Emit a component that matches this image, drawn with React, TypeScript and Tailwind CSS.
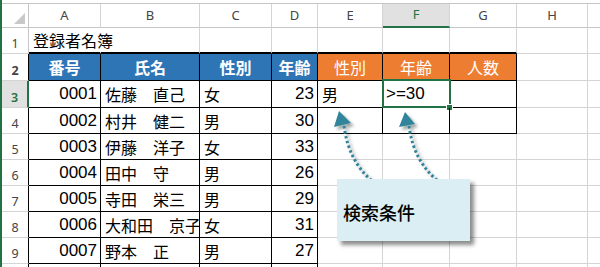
import React from 'react';

const W = ['w-[27px]', 'w-[72px]', 'w-[99px]', 'w-[72px]', 'w-[46px]', 'w-[65px]', 'w-[67px]', 'w-[67px]', 'w-[71px]'];
const GRID = 'border-[#d4d4d4]';

const people = [
  ['0001', '佐藤　直己', '女', '23'],
  ['0002', '村井　健二', '男', '30'],
  ['0003', '伊藤　洋子', '女', '33'],
  ['0004', '田中　守', '男', '26'],
  ['0005', '寺田　栄三', '男', '29'],
  ['0006', '大和田　京子', '女', '31'],
  ['0007', '野本　正', '男', '27'],
];

type CellProps = {
  w: string;
  r?: string;
  b?: string;
  className?: string;
  children?: React.ReactNode;
};

// one sheet cell; r / b are the right and bottom border classes
const Cell = ({ w, r = 'border-r border-r-[#d4d4d4]', b = 'border-b border-b-[#d4d4d4]', className = '', children }: CellProps) => (
  <div className={`${w} shrink-0 h-full box-border flex items-center whitespace-nowrap ${r} ${b} ${className}`}>
    {children}
  </div>
);

const RowHead = ({ n, r = 'border-r border-r-[#c6c6c6]', active = false }: { n: number; r?: string; active?: boolean }) => (
  <div
    className={`w-[27px] shrink-0 h-full box-border flex items-end justify-center pb-[3px] border-b border-b-[#d4d4d4] font-['Noto_Sans',sans-serif] text-[12.5px] leading-none ${r} ${
      active ? 'bg-[#e1e1e1] text-[#217346] font-semibold' : 'bg-white text-[#444]'
    }`}
  >
    {n}
  </div>
);

const Rest = ({ b = 'border-b border-b-[#d4d4d4]' }: { b?: string }) => <div className={`flex-1 h-full box-border ${b}`} />;

const BLK_R = 'border-r border-r-black';
const BLK_B = 'border-b border-b-black';

const DataRow = ({ i, p }: { i: number; p: string[] }) => {
  const rowNo = i + 3;
  const inSearch = rowNo <= 4;
  const last = rowNo === 9;
  const b = last ? BLK_B : BLK_B;
  return (
    <div className={`flex ${rowNo === 3 ? 'h-[27px]' : 'h-[26px]'}`}>
      <RowHead n={rowNo} active={rowNo === 3} r={rowNo === 3 ? 'border-r-2 border-r-[#217346]' : BLK_R} />
      <Cell w={W[1]} r={BLK_R} b={b} className="justify-end pr-[3px] text-[17px] font-['Liberation_Sans','Noto_Sans_CJK_JP',sans-serif]">
        {p[0]}
      </Cell>
      <Cell w={W[2]} r={BLK_R} b={b} className="pl-[4px] text-[16px] overflow-hidden">
        {p[1]}
      </Cell>
      <Cell w={W[3]} r={BLK_R} b={b} className="pl-[4px] text-[16px]">
        {p[2]}
      </Cell>
      <Cell w={W[4]} r={BLK_R} b={b} className="justify-end pr-[3px] text-[17px] font-['Liberation_Sans',sans-serif]">
        {p[3]}
      </Cell>
      <Cell
        w={W[5]}
        r={inSearch ? BLK_R : undefined}
        b={rowNo === 4 ? BLK_B : rowNo === 3 ? BLK_B : undefined}
        className="pl-[4px] text-[16px]"
      >
        {rowNo === 3 ? '男' : null}
      </Cell>
      <Cell
        w={W[6]}
        r={inSearch ? BLK_R : undefined}
        b={rowNo === 4 ? BLK_B : rowNo === 3 ? BLK_B : undefined}
        className="relative pl-[3px] text-[17px] font-['Liberation_Sans',sans-serif]"
      >
        {rowNo === 3 && (
          <>
            &gt;=30
            <div className="absolute left-[-1px] top-[-2px] w-[69px] h-[29px] border-2 border-[#217346]" />
            <div className="absolute right-[-4px] bottom-[-4px] w-[7px] h-[7px] bg-[#217346] border border-white" />
          </>
        )}
      </Cell>
      <Cell w={W[7]} r={inSearch ? BLK_R : undefined} b={rowNo === 4 ? BLK_B : rowNo === 3 ? BLK_B : undefined} />
      <Cell w={W[8]} />
      <Rest />
    </div>
  );
};

export default function App() {
  const letters = ['A', 'B', 'C', 'D', 'E', 'F', 'G', 'H'];
  return (
    <div className="relative w-[600px] h-[267px] overflow-hidden bg-white flex font-['Noto_Sans_CJK_JP',sans-serif] text-black">
      <div className="w-[2px] shrink-0 bg-[#217346]" />
      <div className="flex-1 flex flex-col">
        {/* formula bar edge */}
        <div className="h-[4px] shrink-0 border-b border-b-[#c6c6c6]" />

        {/* column headers */}
        <div className="flex h-[24px] shrink-0 font-['Noto_Sans',sans-serif] text-[13px] text-[#444]">
          <div className="w-[27px] shrink-0 h-full box-border border-r border-b border-[#c6c6c6] flex items-end justify-end pr-[3px] pb-[3px]">
            <svg width="11" height="11" viewBox="0 0 11 11">
              <polygon points="11,0 11,11 0,11" fill="#c8c8c8" />
            </svg>
          </div>
          {letters.map((l, i) => (
            <div
              key={l}
              className={`${W[i + 1]} shrink-0 h-full box-border border-r border-r-[#d4d4d4] flex items-end justify-center pb-[2px] ${
                l === 'F' ? 'bg-[#e1e1e1] text-[#217346] border-b-2 border-b-[#217346]' : 'border-b border-b-[#c6c6c6]'
              }`}
            >
              {l}
            </div>
          ))}
          <div className="flex-1 h-full box-border border-b border-b-[#c6c6c6]" />
        </div>

        {/* row 1 */}
        <div className="flex h-[26px] shrink-0">
          <RowHead n={1} />
          <Cell w={W[1]} r="border-r border-r-transparent" b="border-b-2 border-b-black" className="pl-[4px] text-[16px] overflow-visible">
            登録者名簿
          </Cell>
          <Cell w={W[2]} b="border-b-2 border-b-black" />
          <Cell w={W[3]} b="border-b-2 border-b-black" />
          <Cell w={W[4]} b="border-b-2 border-b-black" />
          <Cell w={W[5]} b="border-b-2 border-b-black" />
          <Cell w={W[6]} b="border-b-2 border-b-black" />
          <Cell w={W[7]} b="border-b-2 border-b-black" />
          <Cell w={W[8]} />
          <Rest />
        </div>

        {/* row 2: table headers */}
        <div className="flex h-[27px] shrink-0 text-white font-bold text-[16px]">
          <RowHead n={2} r={BLK_R} />
          {['番号', '氏名', '性別', '年齢'].map((t, i) => (
            <Cell key={t} w={W[i + 1]} r={BLK_R} b={BLK_B} className="justify-center bg-[#2e75b6]">
              {t}
            </Cell>
          ))}
          {['性別', '年齢', '人数'].map((t, i) => (
            <Cell key={t + i} w={W[i + 5]} r={BLK_R} b={BLK_B} className="justify-center bg-[#ed7d31] font-normal">
              {t}
            </Cell>
          ))}
          <Cell w={W[8]} />
          <Rest />
        </div>

        {people.map((p, i) => (
          <DataRow key={p[0]} i={i} p={p} />
        ))}

        {/* row 10, cut off */}
        <div className="flex flex-1">
          <div className={`w-[27px] shrink-0 border-r border-r-black`} />
          <div className={`${W[1]} shrink-0 border-r border-r-black`} />
          <div className={`${W[2]} shrink-0 border-r border-r-black`} />
          <div className={`${W[3]} shrink-0 border-r border-r-black`} />
          <div className={`${W[4]} shrink-0 border-r border-r-black`} />
          <div className={`${W[5]} shrink-0 border-r ${GRID}`} />
          <div className={`${W[6]} shrink-0 border-r ${GRID}`} />
          <div className={`${W[7]} shrink-0 border-r ${GRID}`} />
          <div className={`${W[8]} shrink-0 border-r ${GRID}`} />
        </div>
      </div>

      {/* arrows */}
      <svg className="absolute left-0 top-0 pointer-events-none" width="600" height="267" viewBox="0 0 600 267">
        <defs>
          <filter id="sh" x="-50%" y="-50%" width="200%" height="200%">
            <feDropShadow dx="3" dy="3" stdDeviation="1.5" floodColor="#000" floodOpacity="0.35" />
          </filter>
        </defs>
        <g filter="url(#sh)">
          <path d="M344 126 Q349 164 376 184" fill="none" stroke="#31849b" strokeWidth="3" strokeDasharray="2.5 2.5" />
          <polygon points="339,111 334,127 351,123" fill="#31849b" />
          <path d="M409 126 Q414 164 442 184" fill="none" stroke="#31849b" strokeWidth="3" strokeDasharray="2.5 2.5" />
          <polygon points="405,112 399,127 415,124" fill="#31849b" />
        </g>
      </svg>

      {/* callout */}
      <div className="absolute left-[337px] top-[179px] w-[133px] h-[62px] bg-[#daeef3] shadow-[4px_4px_4px_rgba(0,0,0,0.45)] flex items-center pl-[6px] pt-[4px] text-[18px] font-medium text-black">
        検索条件
      </div>
    </div>
  );
}
